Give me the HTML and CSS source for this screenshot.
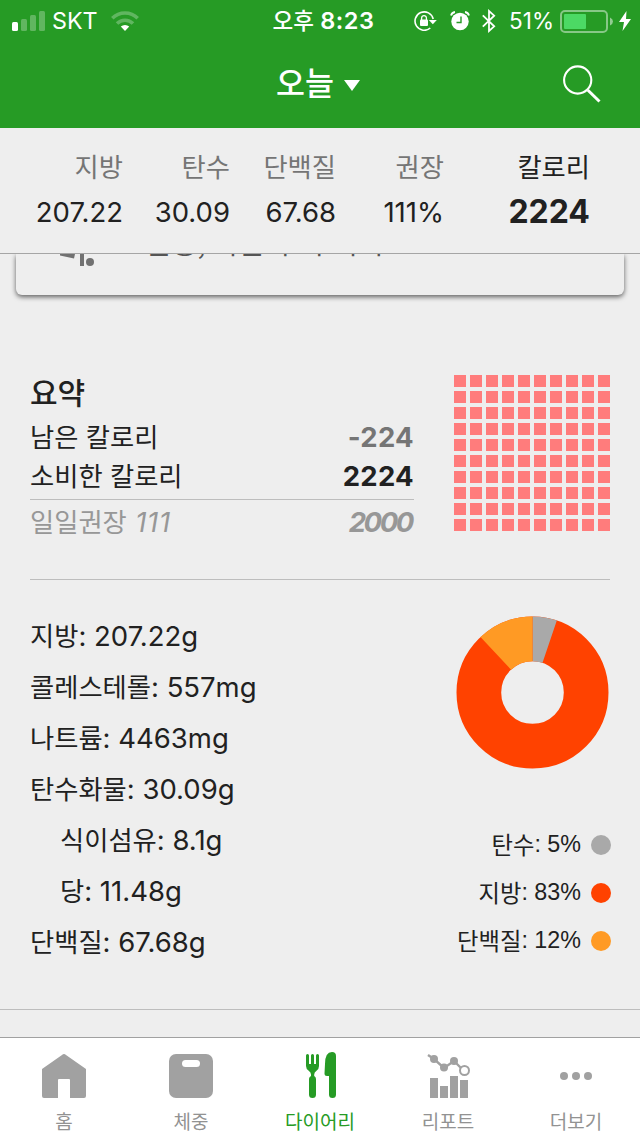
FILE: index.html
```html
<!doctype html>
<html lang="ko">
<head>
  <meta charset="utf-8">
  <title>다이어리</title>
  <link rel="stylesheet" href="styles.css">
</head>
<body>
  <header>
    <div class="status">
      <div class="status-left">
        <svg width="33" height="20" viewBox="0 0 33 20" fill="#fff">
          <rect x="0" y="11" width="6" height="9" rx="1.5"/>
          <g opacity=".27">
            <rect x="9" y="8" width="6" height="12" rx="1.5"/>
            <rect x="18" y="4" width="6" height="16" rx="1.5"/>
            <rect x="27" y="0" width="6" height="20" rx="1.5"/>
          </g>
        </svg>
        <span class="carrier">SKT</span>
        <svg class="wifi" width="28" height="20" viewBox="0 0 28 20" fill="none" stroke="#fff">
          <path d="M1.3 7.2a18 18 0 0 1 25.4 0M6 12.5a11.4 11.4 0 0 1 16 0" stroke-width="3.6" opacity=".27"/>
          <path d="M14 20l-4.2-4.4a6 6 0 0 1 8.4 0z" fill="#fff" stroke="none"/>
        </svg>
      </div>
      <div class="clock"><span class="ko">오후</span> 8:23</div>
      <div class="status-right">
        <svg width="23" height="20" viewBox="0 0 23 20">
          <path d="M19.2 8A9.2 9.2 0 1 0 16.3 17" fill="none" stroke="#fff" stroke-width="1.6"/>
          <path d="M14.8 9h8l-4 4.3z" fill="#fff"/>
          <rect x="6" y="8.5" width="8" height="6.5" rx="1" fill="#fff"/>
          <path d="M7.6 9V7a2.4 2.4 0 0 1 4.8 0v2" fill="none" stroke="#fff" stroke-width="1.3"/>
        </svg>
        <svg class="alarm" width="20" height="20" viewBox="0 0 20 20">
          <circle cx="10" cy="10.5" r="8.7" fill="#fff"/>
          <path d="M11 5.5v6H6.5" fill="none" stroke="#269b25" stroke-width="1.4"/>
          <path d="M1 4.5A5 5 0 0 1 5 1M15 1a5 5 0 0 1 4 3.5" fill="none" stroke="#fff" stroke-width="1.8"/>
        </svg>
        <svg class="bluetooth" width="14" height="24" viewBox="0 0 14 24" fill="none" stroke="#fff" stroke-width="1.8">
          <path d="M.8 6.3l11.4 11L7 22V2l5.2 4.7-11.4 11"/>
        </svg>
        <span class="percent">51%</span>
        <svg class="battery" width="53" height="23" viewBox="0 0 53 23">
          <rect x="1" y="1" width="46" height="21" rx="4" fill="none" stroke="#fff" stroke-width="2" opacity=".45"/>
          <rect x="4" y="4" width="22" height="15" rx="1" fill="#4cd964"/>
          <path d="M50 7.5q3 1.5 3 4t-3 4z" fill="#fff" opacity=".5"/>
        </svg>
        <svg width="12" height="20" viewBox="0 0 12 20"><path d="M7.5 0L0 11h5L3.5 20 12 8H7z" fill="#fff"/></svg>
      </div>
    </div>
    <div class="nav">
      <div class="nav-title">오늘</div>
      <svg class="caret" width="16" height="11" viewBox="0 0 16 11"><path d="M0 0h16L8 11z" fill="#fff"/></svg>
      <svg class="search" width="38" height="38" viewBox="0 0 38 38" fill="none" stroke="#fff">
        <circle cx="14.7" cy="15" r="13.6" stroke-width="2.1"/>
        <path d="M24.7 25L36.5 36.5" stroke-width="3"/>
      </svg>
    </div>
  </header>

  <div class="totals">
    <div class="total"><span class="ko">지방</span><b>207.22</b></div>
    <div class="total"><span class="ko">탄수</span><b>30.09</b></div>
    <div class="total"><span class="ko">단백질</span><b>67.68</b></div>
    <div class="total"><span class="ko">권장</span><b>111%</b></div>
    <div class="total calories"><span class="ko">칼로리</span><b>2224</b></div>
  </div>

  <main>
    <div class="card-clip">
      <div class="card">
        <svg class="shoe" width="36" height="12" viewBox="0 0 36 12" fill="#717171">
          <path d="M0 0h15l-1 4.5L0 1.5z"/>
          <rect x="20" y="0" width="4" height="12"/>
          <circle cx="30" cy="8" r="4"/>
        </svg>
        <div class="card-text">운동, 다른 수치 기기</div>
      </div>
    </div>

    <section class="summary">
      <div class="summary-text">
        <h2>요약</h2>
        <div class="line"><span>남은 칼로리</span><b class="remaining">-224</b></div>
        <div class="line"><span>소비한 칼로리</span><b>2224</b></div>
        <div class="line daily"><span>일일권장 <i>111</i></span><b>2000</b></div>
      </div>
      <svg class="squares" width="156" height="156">
        <defs>
          <pattern id="square" width="16" height="16" patternUnits="userSpaceOnUse">
            <rect width="12" height="12" fill="#ff7c7c"/>
          </pattern>
        </defs>
        <rect width="156" height="156" fill="url(#square)"/>
      </svg>
    </section>

    <section class="nutrition">
      <ul class="nutrients">
        <li>지방<span>: 207.22g</span></li>
        <li>콜레스테롤<span>: 557mg</span></li>
        <li>나트륨<span>: 4463mg</span></li>
        <li>탄수화물<span>: 30.09g</span></li>
        <li class="sub">식이섬유<span>: 8.1g</span></li>
        <li class="sub">당<span>: 11.48g</span></li>
        <li>단백질<span>: 67.68g</span></li>
      </ul>
      <div class="chart">
        <svg class="donut" width="153" height="153" viewBox="-76.5 -76.5 153 153">
          <g fill="none" stroke-width="44.7" transform="rotate(-90)">
            <circle r="53.65" stroke="#ff4200"/>
            <circle r="53.65" stroke="#a9a9a9" pathLength="100" stroke-dasharray="5.2 94.8"/>
            <circle r="53.65" stroke="#ff9a24" pathLength="100" stroke-dasharray="12 88" stroke-dashoffset="-88"/>
          </g>
        </svg>
        <ul class="legend">
          <li>탄수<span>: 5%</span><em class="dot carbs"></em></li>
          <li>지방<span>: 83%</span><em class="dot fat"></em></li>
          <li>단백질<span>: 12%</span><em class="dot protein"></em></li>
        </ul>
      </div>
    </section>
  </main>

  <nav class="tabs">
    <div class="tab">
      <svg width="44" height="50" viewBox="0 0 44 50"><path d="M22 3q1 0 2 1l20 14v27q0 2-2 2H28V29q0-1-1-1H17q-1 0-1 1v18H2q-2 0-2-2V18L20 4q1-1 2-1z" fill="#a1a1a1"/></svg>
      <span>홈</span>
    </div>
    <div class="tab weight">
      <svg width="44" height="50" viewBox="0 0 44 50">
        <rect y="3" width="44" height="44" rx="7" fill="#a1a1a1"/>
        <rect x="13" y="9" width="18" height="7" rx="3.5" fill="#fff"/>
      </svg>
      <span>체중</span>
    </div>
    <div class="tab active">
      <svg width="32" height="50" viewBox="0 0 32 50" fill="#269b25">
        <path d="M2 4.5a1.500 1.500 0 0 1 3 0V13h2V4.500a1.500 1.500 0 0 1 3 0V13h2V4.500a1.500 1.500 0 0 1 3 0V15q0 3-2.500 4.700Q10.200 21.500 10.200 23.500V25Q12 26 12 28v15.500a3.500 3.500 0 0 1-7 0V28q0-2 2-3v-1.500q0-2-2.300-3.800Q2 18 2 15z"/>
        <path d="M21 13Q21 1 28 1q4 0 4 4v38.500a3.500 3.500 0 0 1-7 0V25h-2q-2.500 0-2.500-2.500z"/>
      </svg>
      <span>다이어리</span>
    </div>
    <div class="tab">
      <svg width="44" height="50" viewBox="0 0 44 50" fill="#a1a1a1">
        <path d="M4 27h8v20H4zM14 35h8v12h-8zM24 25h8v22h-8zM34 29h8v18h-8z"/>
        <path d="M2 4l6 4 10 9 10-7 8 8" fill="none" stroke="#a1a1a1" stroke-width="2.4"/>
        <circle cx="8" cy="8" r="4"/><circle cx="18" cy="16.5" r="4"/><circle cx="28" cy="10" r="4"/>
        <circle cx="38.5" cy="19.5" r="4.5" fill="#fff" stroke="#a1a1a1" stroke-width="2"/>
      </svg>
      <span>리포트</span>
    </div>
    <div class="tab">
      <svg width="32" height="50" viewBox="0 0 32 50" fill="#a1a1a1"><circle cx="4" cy="25" r="4"/><circle cx="16" cy="25" r="4"/><circle cx="28" cy="25" r="4"/></svg>
      <span>더보기</span>
    </div>
  </nav>
</body>
</html>
```
FILE: styles.css
```css
* { box-sizing: border-box; margin: 0; padding: 0; }
body { width: 640px; height: 1136px; overflow: hidden; display: flex; flex-direction: column; background: #eee; color: #212121; font-family: "Noto Sans CJK KR", sans-serif; font-size: 26.3px; }
svg { display: block; flex: none; }
ul { list-style-type: none; }

header { height: 128px; background: #269b25; color: #fff; }
.status { height: 40px; display: grid; grid-template-columns: 1fr 98px 1fr; align-items: center; padding: 0 9px 0 12px; font-family: Inter, "Noto Sans CJK KR", sans-serif; }
.status-left, .status-right { display: flex; align-items: center; }
.status-right { justify-content: flex-end; }
.carrier { margin-left: 7px; font-size: 23.3px; line-height: 42px; }
.wifi { margin-left: 13px; }
.clock { font-size: 23.5px; font-weight: 600; line-height: 42px; white-space: nowrap; letter-spacing: .5px; }
.clock .ko { font-size: 22.5px; font-weight: 500; letter-spacing: 0; }
.alarm { margin-left: 13px; }
.bluetooth { margin-left: 12px; }
.percent { margin: 0 6px 0 13px; font-size: 22.5px; line-height: 42px; }
.battery { margin-right: 6px; }
.nav { height: 88px; display: flex; align-items: center; padding: 0 39px 3px 276px; }
.nav-title { font-size: 31.5px; font-weight: 500; line-height: 42px; margin-top: -3px; }
.caret { margin-left: 10px; margin-top: 5px; }
.search { margin-left: auto; margin-top: 2px; }

.totals { height: 126px; flex: none; display: grid; grid-template-columns: 123px 107px 106px 108px 146px; border-bottom: 1px solid #a5a5a5; padding-top: 15px; }
.total { display: flex; flex-direction: column; text-align: right; color: #757575; line-height: 45px; }
.total b { color: #212121; font-family: Inter, sans-serif; font-size: 27.5px; font-weight: 400; line-height: 48px; }
.calories { color: #212121; }
.calories b { font-size: 32px; font-weight: 700; }

main { flex: 1; overflow: hidden; }
.card-clip { height: 60px; overflow: hidden; padding: 0 16px; }
.card { height: 41px; display: flex; border-radius: 0 0 6px 6px; box-shadow: 0 2px 5px rgba(0, 0, 0, .6); background: #eee; }
.shoe { margin-left: 44px; }
.card-text { margin-left: 50px; margin-top: -22px; font-size: 28px; line-height: 20px; height: 20px; white-space: pre; color: #555; }

.summary { height: 266px; margin: 0 30px; display: flex; justify-content: space-between; border-bottom: 1px solid #bdbdbd; padding-top: 61px; }
.summary-text { width: 384px; }
h2 { font-size: 30px; font-weight: 500; line-height: 32px; height: 42px; }
.line { height: 39px; line-height: 37px; display: flex; justify-content: space-between; white-space: nowrap; }
.line b { font-family: Inter, sans-serif; font-size: 27.5px; font-weight: 700; line-height: 40px; letter-spacing: .3px; }
.line .remaining { color: #757575; }
.daily { height: 45px; line-height: 42px; border-top: 1px solid #bdbdbd; margin-top: 4px; color: #979797; }
.daily i { font-family: Inter, sans-serif; font-size: 27.5px; letter-spacing: .7px; margin-left: 1px; }
.daily b { font-style: italic; letter-spacing: -2.4px; line-height: 45px; padding-right: 2px; }

.nutrition { height: 430px; border-bottom: 1px solid #bdbdbd; padding: 30px 29px 0 30px; display: flex; justify-content: space-between; }
.nutrients li { height: 51px; line-height: 49px; white-space: nowrap; }
.nutrients span { font-family: Inter, sans-serif; font-size: 27.5px; }
.nutrients .sub { padding-left: 30px; }
.chart { padding-top: 6px; }
.donut { margin: 0 2px 0 auto; }
.legend { margin-top: 52px; }
.legend li { height: 48px; line-height: 47px; display: flex; justify-content: flex-end; font-size: 23.3px; }
.legend span { font-family: "Liberation Sans", sans-serif; }
.dot { width: 20px; height: 20px; border-radius: 50%; margin: 14px 0 0 10px; }
.carbs { background: #a9a9a9; }
.fat { background: #ff4200; }
.protein { background: #ff9a24; }

.tabs { height: 99px; flex: none; display: grid; grid-template-columns: repeat(5, 1fr); border-top: 1px solid #a1a1a1; background: #fff; padding-top: 13px; }
.tab { display: flex; flex-direction: column; align-items: center; color: #929292; font-size: 19px; }
.tab span { line-height: 26px; margin-top: 7px; }
.weight { padding-right: 2px; }
.tab.active { color: #269b25; }
```
